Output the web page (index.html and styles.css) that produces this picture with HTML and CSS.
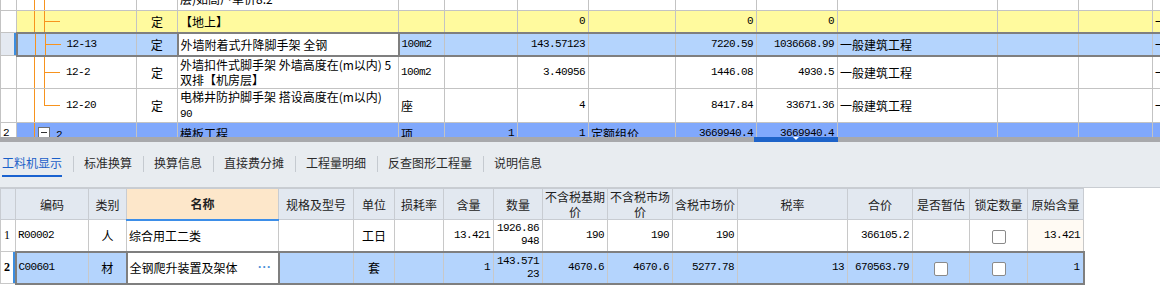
FILE: index.html
```html
<!DOCTYPE html>
<html lang="zh-CN">
<head>
    <meta charset="UTF-8">
    <title>分部分项</title>
    <link rel="stylesheet" href="styles.css">
</head>
<body>

<!-- upper grid: items list (scrolled) -->
<div class="upper">
    <table class="grid grid-top">
        <colgroup>
            <col style="width:16px"><col style="width:120px"><col style="width:41px"><col style="width:221px">
            <col style="width:46px"><col style="width:73px"><col style="width:71px"><col style="width:87px">
            <col style="width:81px"><col style="width:81px"><col style="width:160px"><col style="width:81px">
            <col style="width:74px"><col style="width:90px">
        </colgroup>
        <tr class="r-cut">
            <td class="rn"></td>
            <td class="tree"></td>
            <td></td>
            <td class="txt">层)如高户单价8.2</td>
            <td></td><td></td><td></td><td></td><td></td><td></td><td></td><td></td><td></td><td></td>
        </tr>
        <tr class="r-yellow">
            <td class="rn"></td>
            <td class="tree branch"></td>
            <td class="c">定</td>
            <td class="txt">【地上】</td>
            <td></td>
            <td></td>
            <td class="n">0</td>
            <td></td>
            <td class="n">0</td>
            <td class="n">0</td>
            <td></td><td></td><td></td>
            <td class="txt">一</td>
        </tr>
        <tr class="r-sel">
            <td class="rn"></td>
            <td class="tree branch code">12-13</td>
            <td class="c">定</td>
            <td class="txt edit">外墙附着式升降脚手架 全钢</td>
            <td class="n-l">100m2</td>
            <td></td>
            <td class="n">143.57123</td>
            <td></td>
            <td class="n">7220.59</td>
            <td class="n">1036668.99</td>
            <td class="txt">一般建筑工程</td>
            <td></td><td></td>
            <td class="txt">一</td>
        </tr>
        <tr class="r-tall">
            <td class="rn"></td>
            <td class="tree branch code">12-2</td>
            <td class="c">定</td>
            <td class="txt">外墙扣件式脚手架 外墙高度在(m以内) 5<br>双排【机房层】</td>
            <td class="n-l">100m2</td>
            <td></td>
            <td class="n">3.40956</td>
            <td></td>
            <td class="n">1446.08</td>
            <td class="n">4930.5</td>
            <td class="txt">一般建筑工程</td>
            <td></td><td></td>
            <td class="txt">一</td>
        </tr>
        <tr class="r-tall">
            <td class="rn"></td>
            <td class="tree branch last code">12-20</td>
            <td class="c">定</td>
            <td class="txt">电梯井防护脚手架 搭设高度在(m以内)<br><span class="n-in">90</span></td>
            <td class="txt">座</td>
            <td></td>
            <td class="n">4</td>
            <td></td>
            <td class="n">8417.84</td>
            <td class="n">33671.36</td>
            <td class="txt">一般建筑工程</td>
            <td></td><td></td>
            <td class="txt">一</td>
        </tr>
        <tr class="r-group">
            <td class="rn n-l">2</td>
            <td class="tree root"><span class="toggle"></span><span class="n-in">2</span></td>
            <td></td>
            <td class="txt">模板工程</td>
            <td class="txt">项</td>
            <td class="n">1</td>
            <td class="n">1</td>
            <td class="txt">定额组价</td>
            <td class="n">3669940.4</td>
            <td class="n">3669940.4</td>
            <td></td><td></td><td></td><td></td>
        </tr>
    </table>
</div>

<div class="splitter">
    <div class="splitter-thumb"><span class="arrow"></span></div>
</div>

<!-- detail tabs -->
<div class="tabs">
    <span class="tab active">工料机显示</span><span class="sep"></span>
    <span class="tab">标准换算</span><span class="sep"></span>
    <span class="tab">换算信息</span><span class="sep"></span>
    <span class="tab">直接费分摊</span><span class="sep"></span>
    <span class="tab">工程量明细</span><span class="sep"></span>
    <span class="tab">反查图形工程量</span><span class="sep"></span>
    <span class="tab">说明信息</span>
</div>

<!-- lower grid: resources of the selected item -->
<table class="grid grid-bottom">
    <colgroup>
        <col style="width:15px"><col style="width:73px"><col style="width:38px"><col style="width:152px">
        <col style="width:75px"><col style="width:41px"><col style="width:49px"><col style="width:50px">
        <col style="width:49px"><col style="width:65px"><col style="width:65px"><col style="width:65px">
        <col style="width:110px"><col style="width:65px"><col style="width:57px"><col style="width:58px">
        <col style="width:56px">
    </colgroup>
    <tr class="head">
        <th></th>
        <th>编码</th>
        <th>类别</th>
        <th class="sorted">名称</th>
        <th>规格及型号</th>
        <th>单位</th>
        <th>损耗率</th>
        <th>含量</th>
        <th>数量</th>
        <th>不含税基期<br>价</th>
        <th>不含税市场<br>价</th>
        <th>含税市场价</th>
        <th>税率</th>
        <th>合价</th>
        <th>是否暂估</th>
        <th>锁定数量</th>
        <th>原始含量</th>
    </tr>
    <tr class="row">
        <td class="rn">1</td>
        <td class="n-l">R00002</td>
        <td class="c">人</td>
        <td class="txt">综合用工二类</td>
        <td></td>
        <td class="c">工日</td>
        <td></td>
        <td class="n">13.421</td>
        <td class="n two">1926.86<br>948</td>
        <td class="n">190</td>
        <td class="n">190</td>
        <td class="n">190</td>
        <td></td>
        <td class="n">366105.2</td>
        <td></td>
        <td class="c"><span class="chk"></span></td>
        <td class="n orig">13.421</td>
    </tr>
    <tr class="row r-sel">
        <td class="rn">2</td>
        <td class="n-l">C00601</td>
        <td class="c">材</td>
        <td class="txt edit"><div class="edit-box"><span>全钢爬升装置及架体</span><span class="more">···</span></div></td>
        <td></td>
        <td class="c">套</td>
        <td></td>
        <td class="n">1</td>
        <td class="n two">143.571<br>23</td>
        <td class="n">4670.6</td>
        <td class="n">4670.6</td>
        <td class="n">5277.78</td>
        <td class="n">13</td>
        <td class="n">670563.79</td>
        <td class="c"><span class="chk"></span></td>
        <td class="c"><span class="chk"></span></td>
        <td class="n">1</td>
    </tr>
</table>

</body>
</html>
```

FILE: styles.css
```css
body {
    margin: 0;
    width: 1160px;
    overflow: hidden;
    background: #fff;
    color: #000;
    font-family: "Noto Sans CJK SC", sans-serif;
    font-size: 12px;
}

/* shared grid */
.grid {
    border-collapse: collapse;
    table-layout: fixed;
}
.grid td,
.grid th {
    border: 1px solid #c3c3c3;
    padding: 0 2px;
    white-space: nowrap;
    overflow: hidden;
    line-height: 15px;
}
.grid .c {
    text-align: center;
}
.grid .txt {
    text-align: left;
}
.grid .n,
.grid .n-l,
.n-in {
    font-family: "Liberation Mono", monospace;
    font-size: 11px;
    letter-spacing: -0.6px;
}
.grid .n {
    text-align: right;
    padding-right: 3px;
}

/* upper grid */
.upper {
    height: 137px;
    overflow: hidden;
}
.grid-top {
    width: 1242px;
    margin-top: -15px;
}
.grid-top .r-cut { height: 25px; }
.grid-top .r-yellow { height: 22px; }
.grid-top .r-sel { height: 23px; }
.grid-top .r-tall { height: 33px; }
.grid-top .r-group { height: 22px; }

.grid-top .r-yellow td { background-color: #fffa9e; }
.grid-top .r-sel td { background-color: #b4d4fd; }
.grid-top .r-group td { background-color: #80a8fc; }
.grid-top td.rn { background-color: #fff; }

.grid-top .r-sel td {
    border-top: 2px solid #7f7f7f;
    border-bottom: 2px solid #7f7f7f;
}
.grid-top .r-sel td.rn {
    border-top: 1px solid #c3c3c3;
    border-bottom: 1px solid #c3c3c3;
    background-color: #e4e9f1;
    box-shadow: inset -2px 0 #3b8de0;
}
.grid-top .r-sel td.tree {
    border-left: 2px solid #7f7f7f;
}
.grid-top .r-sel td.edit {
    background-color: #fff;
    border: 2px solid #7f7f7f;
}
.grid-top td.rn.n-l {
    padding-left: 2px;
}

/* tree lines in the code column */
.grid-top td.tree {
    padding-left: 49px;
    background-image:
        linear-gradient(#f7931e, #f7931e),
        linear-gradient(#f7931e, #f7931e);
    background-size: 1px 100%, 1px 100%;
    background-position: 17px 0, 27px 0;
    background-repeat: no-repeat;
}
.grid-top td.tree.branch {
    background-image:
        linear-gradient(#f7931e, #f7931e),
        linear-gradient(#f7931e, #f7931e),
        linear-gradient(#f7931e, #f7931e);
    background-size: 1px 100%, 1px 100%, 16px 1px;
    background-position: 17px 0, 27px 0, 27px 50%;
}
.grid-top td.tree.branch.last {
    background-size: 1px 100%, 1px 50%, 16px 1px;
}
.grid-top td.tree.root {
    padding-left: 21px;
    background-image: linear-gradient(#f7931e, #f7931e);
    background-size: 1px 100%;
    background-position: 17px 0;
}
.grid-top .code {
    font-family: "Liberation Mono", monospace;
    font-size: 11px;
    letter-spacing: -0.6px;
}
.toggle {
    display: inline-block;
    width: 10px;
    height: 10px;
    border: 1px solid #6f6f6f;
    background: #fff linear-gradient(#333, #333) center / 6px 1px no-repeat;
    vertical-align: -1px;
    margin-right: 6px;
}

/* splitter between grids */
.splitter {
    height: 5px;
    background: #a8a9ac;
    display: flex;
}
.splitter-thumb {
    margin-left: 754px;
    width: 84px;
    height: 5px;
    background: #1e63c9;
    display: flex;
    justify-content: center;
}
.arrow {
    width: 0;
    height: 0;
    border-left: 3px solid transparent;
    border-right: 3px solid transparent;
    border-top: 3px solid #fff;
}

/* tabs */
.tabs {
    display: flex;
    align-items: flex-start;
    height: 32px;
    padding: 13px 0 0 2px;
    background: #e8ecf0;
    border-bottom: 1px solid #c9cdd2;
}
.tab {
    line-height: 16px;
    color: #2b2b2b;
}
.tab.active {
    color: #1a5fc8;
    padding-bottom: 4px;
    border-bottom: 2px solid #1a62d0;
}
.sep {
    width: 1px;
    height: 16px;
    margin: 1px 10px 0 11px;
    background: #c5cad0;
}

/* lower grid */
.grid-bottom {
    width: 1083px;
}
.grid-bottom .head {
    height: 30px;
}
.grid-bottom th {
    background: #e2e8f0;
    font-weight: normal;
    color: #222;
    line-height: 15px;
    padding: 0 1px;
    border-color: #c8ccd2;
}
.grid-bottom th.sorted {
    background: #fde7ca;
    font-weight: bold;
    border-bottom: 2px solid #3d8ee8;
}
.grid-bottom .row {
    height: 32px;
}
.grid-bottom td {
    border-color: #c8c8c8;
}
.grid-bottom td.rn {
    font-family: "Liberation Serif", serif;
    font-size: 12px;
    padding: 0 0 0 3px;
}
.grid-bottom td.n-l {
    padding-left: 2px;
}
.grid-bottom td.two {
    white-space: nowrap;
    line-height: 13px;
}
.grid-bottom td.orig {
    background: #fffaf3;
}
.grid-bottom .r-sel td {
    background-color: #b4d4fd;
    border-top: 2px solid #7f7f7f;
    border-bottom: 2px solid #7f7f7f;
}
.grid-bottom .r-sel td:last-child {
    border-right: 2px solid #7f7f7f;
}
.grid-bottom .r-sel td.rn {
    background-color: #fff;
    font-weight: bold;
    border-top: 1px solid #c8c8c8;
    border-bottom: 1px solid #c8c8c8;
    box-shadow: inset -2px 0 #3b8de0;
}
.grid-bottom .r-sel td.n-l {
    border-left: 2px solid #7f7f7f;
}
.grid-bottom .r-sel td.edit {
    background-color: #fff;
    border: 2px solid #7f7f7f;
}
.edit-box {
    display: flex;
    justify-content: space-between;
    align-items: center;
}
.more {
    font-family: "Liberation Sans", sans-serif;
    color: #4a8fd8;
    font-weight: bold;
    letter-spacing: 0.5px;
    margin-right: 4px;
}
.chk {
    display: inline-block;
    width: 12px;
    height: 12px;
    border: 1px solid #8a8a8a;
    border-radius: 2px;
    background: #fff;
    vertical-align: middle;
}
```
